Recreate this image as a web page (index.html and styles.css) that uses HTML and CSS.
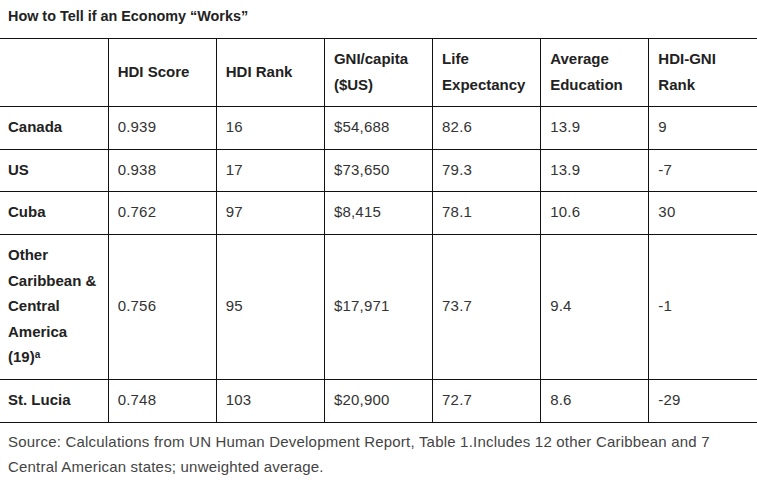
FILE: index.html
```html
<!DOCTYPE html>
<html lang="en">
<head>
<meta charset="utf-8">
<title>How to Tell if an Economy “Works”</title>
<link rel="stylesheet" href="styles.css">
</head>
<body>
<figure class="datatable">
  <h3 class="datatable-title">How to Tell if an Economy “Works”</h3>
  <table class="grid">
    <thead>
      <tr>
        <th class="rowhead"></th>
        <th>HDI Score</th>
        <th>HDI Rank</th>
        <th>GNI/capita ($US)</th>
        <th>Life Expectancy</th>
        <th>Average Education</th>
        <th>HDI-GNI Rank</th>
      </tr>
    </thead>
    <tbody>
      <tr>
        <th class="rowhead">Canada</th>
        <td>0.939</td><td>16</td><td>$54,688</td><td>82.6</td><td>13.9</td><td>9</td>
      </tr>
      <tr>
        <th class="rowhead">US</th>
        <td>0.938</td><td>17</td><td>$73,650</td><td>79.3</td><td>13.9</td><td>-7</td>
      </tr>
      <tr>
        <th class="rowhead">Cuba</th>
        <td>0.762</td><td>97</td><td>$8,415</td><td>78.1</td><td>10.6</td><td>30</td>
      </tr>
      <tr>
        <th class="rowhead">Other Caribbean &amp; Central America (19)<sup>a</sup></th>
        <td>0.756</td><td>95</td><td>$17,971</td><td>73.7</td><td>9.4</td><td>-1</td>
      </tr>
      <tr>
        <th class="rowhead">St. Lucia</th>
        <td>0.748</td><td>103</td><td>$20,900</td><td>72.7</td><td>8.6</td><td>-29</td>
      </tr>
    </tbody>
  </table>
  <figcaption class="datatable-note">Source: Calculations from UN Human Development Report, Table 1.Includes 12 other Caribbean and 7 Central American states; unweighted average.</figcaption>
</figure>
</body>
</html>
```
FILE: styles.css
```css
html, body {
  margin: 0;
  padding: 0;
  background: #ffffff;
}

body {
  font-family: "Liberation Sans", Arial, sans-serif;
  color: #333333;
  width: 757px;
  overflow: hidden;
}

.datatable {
  margin: 0;
  padding: 0;
}

.datatable-title {
  margin: 0;
  padding: 5px 8px 0;
  font-size: 14.4px;
  font-weight: 700;
  line-height: 22px;
  color: #222222;
  margin-bottom: 11px;
}

.grid {
  width: 757px;
  table-layout: fixed;
  border-collapse: collapse;
  font-size: 15px;
  line-height: 25.6px;
}

.grid th,
.grid td {
  border-top: 1px solid #111111;
  border-bottom: 1px solid #111111;
  border-left: 1px solid #111111;
  padding: 7px 8px 9px 9px;
  text-align: left;
  vertical-align: middle;
}

.grid th {
  font-weight: 700;
  color: #222222;
}

.grid td {
  font-weight: 400;
  color: #333333;
  letter-spacing: 0.2px;
}

.grid tr > :first-child {
  border-left: none;
  padding-left: 8px;
}

.grid sup {
  font-size: 10px;
  line-height: 0;
  vertical-align: 4px;
}

.datatable-note {
  margin: 6px 0 0;
  padding: 0 8px;
  font-size: 15px;
  line-height: 25.6px;
  letter-spacing: 0.2px;
  color: #444444;
}
```
